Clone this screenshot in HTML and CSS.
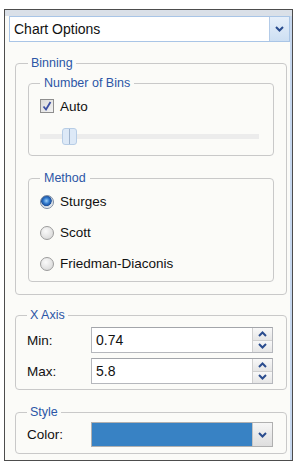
FILE: index.html
```html
<!DOCTYPE html>
<html lang="en">
<head>
<meta charset="UTF-8">
<title>Chart Options</title>
<link rel="stylesheet" href="styles.css">
</head>
<body>
<div class="panel">
  <div class="header-select">
    <span class="header-text">Chart Options</span>
    <span class="drop-btn blue"><svg width="9" height="6" viewBox="0 0 9 6"><path d="M1 1 L4.5 4.5 L8 1" fill="none" stroke="#2a4c8e" stroke-width="2"/></svg></span>
  </div>
  <div class="panel-body">
    <fieldset class="group outer binning">
      <legend>Binning</legend>
      <fieldset class="group inner bins">
        <legend>Number of Bins</legend>
        <div class="check-row">
          <span class="checkbox"><svg width="12" height="12" viewBox="0 0 12 12"><path d="M2.5 6.5 L5 9.5 L9.5 2" fill="none" stroke="#3b4fa3" stroke-width="1.8"/></svg></span>
          <span>Auto</span>
        </div>
        <div class="slider">
          <div class="thumb"></div>
        </div>
      </fieldset>
      <fieldset class="group inner method">
        <legend>Method</legend>
        <div class="radio-row"><span class="radio checked"></span><span>Sturges</span></div>
        <div class="radio-row"><span class="radio"></span><span>Scott</span></div>
        <div class="radio-row"><span class="radio"></span><span>Friedman-Diaconis</span></div>
      </fieldset>
    </fieldset>

    <fieldset class="group outer axis">
      <legend>X Axis</legend>
      <div class="field-row">
        <span class="field-label">Min:</span>
        <div class="spin-box">
          <span class="spin-value">0.74</span>
          <span class="spin-btns">
            <span class="spin-half"><svg width="9" height="6" viewBox="0 0 9 6"><path d="M1 5 L4.5 1.5 L8 5" fill="none" stroke="#2a4c8e" stroke-width="2"/></svg></span>
            <span class="spin-half"><svg width="9" height="6" viewBox="0 0 9 6"><path d="M1 1 L4.5 4.5 L8 1" fill="none" stroke="#2a4c8e" stroke-width="2"/></svg></span>
          </span>
        </div>
      </div>
      <div class="field-row">
        <span class="field-label">Max:</span>
        <div class="spin-box">
          <span class="spin-value">5.8</span>
          <span class="spin-btns">
            <span class="spin-half"><svg width="9" height="6" viewBox="0 0 9 6"><path d="M1 5 L4.5 1.5 L8 5" fill="none" stroke="#2a4c8e" stroke-width="2"/></svg></span>
            <span class="spin-half"><svg width="9" height="6" viewBox="0 0 9 6"><path d="M1 1 L4.5 4.5 L8 1" fill="none" stroke="#2a4c8e" stroke-width="2"/></svg></span>
          </span>
        </div>
      </div>
    </fieldset>

    <fieldset class="group outer style">
      <legend>Style</legend>
      <div class="field-row color-row">
        <span class="field-label">Color:</span>
        <div class="color-box">
          <span class="color-fill"></span>
          <span class="drop-btn gray"><svg width="9" height="6" viewBox="0 0 9 6"><path d="M1 1 L4.5 4.5 L8 1" fill="none" stroke="#2a4c8e" stroke-width="2"/></svg></span>
        </div>
      </div>
    </fieldset>
  </div>
</div>
</body>
</html>
```

FILE: styles.css
```css
body { margin: 0; background: #fff; font-family: "Liberation Sans", Arial, sans-serif; font-size: 13.5px; color: #111; }

.panel { margin: 9px 0 0 4px; width: 289px; box-sizing: border-box; border: 1px solid #4d4d4d; border-top-width: 1px; background: #fbfbf8; box-shadow: inset 0 6px 0 #dae0e8, inset -2px 0 0 #c6d7ee; padding-top: 6px; }

.header-select { display: flex; height: 26px; box-sizing: border-box; margin-left: 4px; width: 281px; border: 1px solid #a9c5e6; background: #fff; }
.header-text { flex: 1; padding-left: 4px; line-height: 24px; font-size: 14px; }
.drop-btn { width: 19px; display: flex; align-items: center; justify-content: center; }
.drop-btn.blue { background: linear-gradient(#e6effa, #cddff3); border-left: 1px solid #b3cbe8; }
.drop-btn.gray { background: linear-gradient(#f6f6f6, #dedede); border-left: 1px solid #c3c3c3; }

.panel-body { padding: 13px 5px 6px 10px; display: flex; flex-direction: column; }

.group { margin: 0; min-width: 0; border: 1px solid #c9c9c9; border-radius: 4px; }
.group legend { padding: 0 3px; line-height: 16px; font-size: 12.5px; color: #2c56a6; }

.outer { padding: 4px 12px 12px 12px; }
.outer.axis { margin-top: 12px; padding: 4px 13px 5px 11px; }
.outer.style { margin-top: 14px; padding: 2px 13px 6px 11px; }

.inner { padding: 0 11px 10px 11px; }
.inner legend { padding: 0 4px; }
.inner.bins { padding-top: 5px; }
.inner.method { margin-top: 14px; padding-bottom: 2px; }

.check-row { display: flex; align-items: center; height: 20px; gap: 6px; }
.checkbox { width: 14px; height: 14px; box-sizing: border-box; border: 1px solid #8e8e8e; background: linear-gradient(135deg, #d9d9d9, #f3f3f3); display: flex; align-items: center; justify-content: center; }

.slider { margin-top: 12px; height: 17px; display: flex; align-items: center; background: linear-gradient(#ececec, #ececec) no-repeat 0 center / 219px 5px; border-radius: 3px; }
.thumb { margin-left: 22px; width: 15px; height: 17px; box-sizing: border-box; border: 1px solid #b7cde6; border-radius: 3px; background: linear-gradient(90deg, #dde9f7 6px, #9fb3cc 6px, #9fb3cc 7px, #dde9f7 7px); }

.radio-row { display: flex; align-items: center; height: 31px; gap: 6px; }
.radio { width: 14px; height: 14px; box-sizing: border-box; border-radius: 50%; border: 1px solid #9c9c9c; background: radial-gradient(circle at 40% 35%, #fafafa, #d2d2d2); }
.radio.checked { border-color: #7a8aa0; background: radial-gradient(circle at 45% 40%, #9fd0f8 0, #2f78cc 3px, #1d4f9a 5px, #c9d3de 5.5px, #eef1f4 7px); }

.field-row { display: flex; align-items: center; }
.field-row + .field-row { margin-top: 5px; }
.field-label { width: 64px; }

.spin-box { flex: 1; display: flex; height: 26px; box-sizing: border-box; border: 1px solid #b5b7bc; border-top-color: #a3a5aa; background: #fff; }
.spin-value { flex: 1; padding-left: 4px; line-height: 24px; font-size: 14px; }
.spin-btns { width: 19px; display: flex; flex-direction: column; border-left: 1px solid #cfcfcf; }
.spin-half { flex: 1; display: flex; align-items: center; justify-content: center; background: linear-gradient(#f8f8f8, #e6e6e6); }
.spin-half + .spin-half { border-top: 1px solid #d0d0d0; }

.color-box { flex: 1; display: flex; height: 25px; box-sizing: border-box; border: 1px solid #b0b0b0; }
.color-fill { flex: 1; background: #3882c4; }
```
